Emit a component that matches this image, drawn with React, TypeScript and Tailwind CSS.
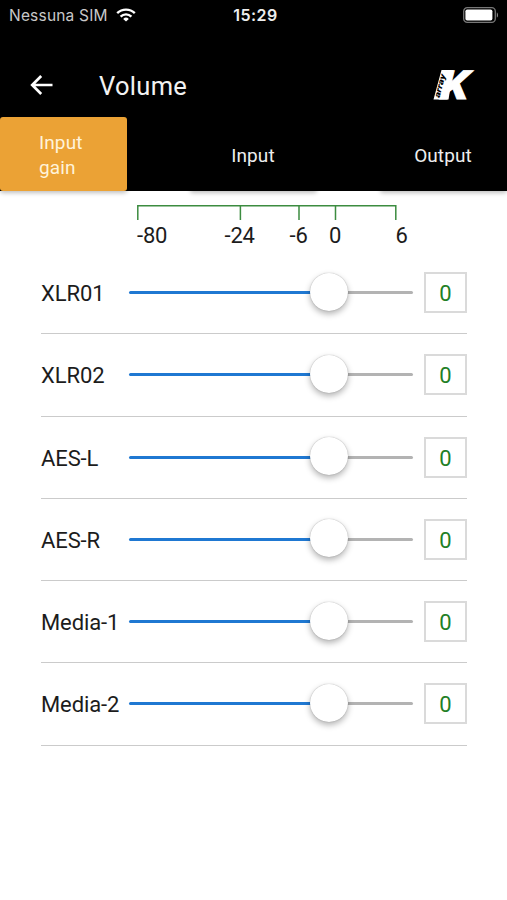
import { useState } from 'react';
import clsx from 'clsx';

const tabs = [
  { id: 'gain', label: 'Input gain' },
  { id: 'input', label: 'Input' },
  { id: 'output', label: 'Output' },
];

const channels = ['XLR01', 'XLR02', 'AES-L', 'AES-R', 'Media-1', 'Media-2'];

// Slider travel in percent for a level of 0 dB
const ZERO_DB = 70.6;

function StatusBar() {
  return (
    <div className="flex h-[30px] items-center justify-between pl-[9px] pr-[8px] font-['Inter',sans-serif]">
      <div className="flex w-[200px] items-center gap-[8px]">
        <span className="whitespace-nowrap pt-px text-[15.5px] leading-5 tracking-[0.2px] text-[#c8c8c8]">Nessuna SIM</span>
        <svg width="20" height="14" viewBox="0 0 20 14" fill="none" stroke="#fff" strokeWidth="2.4">
          <path d="M1.2 5.2a12.5 12.5 0 0 1 17.6 0" />
          <path d="M4.6 8.6a7.7 7.7 0 0 1 10.8 0" />
          <path d="M10 13.6 7.2 10.9a4 4 0 0 1 5.6 0z" fill="#fff" stroke="none" />
        </svg>
      </div>
      <span className="mr-[-3px] text-[16px] font-semibold leading-5 tracking-[0.5px] text-[#eee]">15:29</span>
      <div className="flex w-[200px] justify-end">
        <svg width="36" height="16" viewBox="0 0 36 16">
          <rect x="0.7" y="0.7" width="31.6" height="14.6" rx="3.6" fill="none" stroke="#777" strokeWidth="1.3" />
          <rect x="2.4" y="2.4" width="27" height="11.2" rx="1.8" fill="#fff" />
          <path d="M33.8 5.4c1.6.6 1.6 4.6 0 5.2z" fill="#888" />
        </svg>
      </div>
    </div>
  );
}

function BrandLogo() {
  return (
    <svg width="42" height="30" viewBox="0 0 42 30" className="overflow-visible">
      <polygon points="8.5,0 20,0 15.5,29.5 0.5,29.5" fill="#fff" />
      <text
        transform="translate(6.2 29.2) skewX(-3)"
        textLength="28.5"
        lengthAdjust="spacingAndGlyphs"
        className="fill-white stroke-white font-['Roboto',sans-serif] text-[40px] font-black italic [stroke-width:0.9]"
      >
        K
      </text>
      <text
        transform="translate(6.4 28) rotate(-75)"
        textLength="24"
        lengthAdjust="spacingAndGlyphs"
        className="fill-black font-['Roboto',sans-serif] text-[8px] font-black italic"
      >
        array
      </text>
    </svg>
  );
}

function Scale() {
  return (
    <div className="ml-[137px] w-[272px] pt-[14px]">
      <svg width="260" height="15" viewBox="0 0 260 15" fill="none" stroke="#3c8c40" strokeWidth="1.5">
        <path d="M0.8 15V0.8H258.8V15M103.4 0.8V15M162 0.8V15M198.5 0.8V15" />
      </svg>
      <div className="flex text-[22px] leading-[31px] tracking-[-0.2px] text-[#1c1c1c]">
        <span className="w-[87.5px]">-80</span>
        <span className="w-[65px]">-24</span>
        <span className="w-[39.5px]">-6</span>
        <span className="w-[66.5px]">0</span>
        <span>6</span>
      </div>
    </div>
  );
}

function ChannelRow({ name, value }: { name: string; value: number }) {
  return (
    <div className="flex h-[82.25px] items-center border-b-[1.5px] border-[#cbcbcb]">
      <span className="w-[88px] whitespace-nowrap pt-[2px] text-[22px] tracking-[-0.1px] text-[#1c1c1c]">{name}</span>
      <div className="relative flex h-10 w-[284px] items-center">
        <div className="h-[3px] rounded-l-full bg-[#1f78d2]" style={{ width: `${ZERO_DB}%` }} />
        <div className="h-[3px] flex-1 rounded-r-full bg-[#b3b3b3]" />
        <div
          className="absolute top-[0px] size-[38px] -translate-x-1/2 rounded-full bg-white shadow-[0_0_1px_rgba(0,0,0,0.35),0_3px_6px_rgba(0,0,0,0.3)]"
          style={{ left: `${ZERO_DB}%` }}
        />
      </div>
      <div className="ml-[11px] flex h-[41px] w-[43px] items-center justify-center border-2 border-[#dadada] pt-[2px] pl-px text-[22px] text-[#1f8026]">
        {value}
      </div>
    </div>
  );
}

export default function App() {
  const [active, setActive] = useState('gain');

  return (
    <div className="h-[900px] w-[507px] overflow-hidden bg-white font-['Roboto',sans-serif]">
      <header className="h-[191px] bg-black">
        <StatusBar />
        <div className="flex h-[87px] items-center pl-[30px] pr-[32px] pt-[23px]">
          <svg width="23" height="20" viewBox="0 0 23 20" fill="none" stroke="#fff" strokeWidth="2.7">
            <path d="M22.5 10H2.5M11.2 1 2.2 10l9 9" />
          </svg>
          <h1 className="ml-[46px] flex-1 pt-px text-[25.5px] leading-8 tracking-[0.3px] text-[#f2f2f2]">Volume</h1>
          <BrandLogo />
        </div>
        <nav className="flex h-[74px] justify-between">
          {tabs.map((tab) => (
            <button
              key={tab.id}
              onClick={() => setActive(tab.id)}
              className={clsx(
                'flex w-[127px] items-center justify-center rounded-[3px] pt-[2px] pr-px text-left text-[19px] leading-[25px] tracking-[0.1px] shadow-[0_2px_4px_rgba(0,0,0,0.25)]',
                active === tab.id ? 'bg-[#eba235] text-[#fff3da]' : 'bg-black text-[#eee]',
              )}
            >
              <span className={clsx(tab.id === 'gain' && 'w-[48px]')}>{tab.label}</span>
            </button>
          ))}
        </nav>
      </header>
      <main>
        <Scale />
        <div className="mx-[41px] mt-[1px] w-[425.5px]">
          {channels.map((name) => (
            <ChannelRow key={name} name={name} value={0} />
          ))}
        </div>
      </main>
    </div>
  );
}
